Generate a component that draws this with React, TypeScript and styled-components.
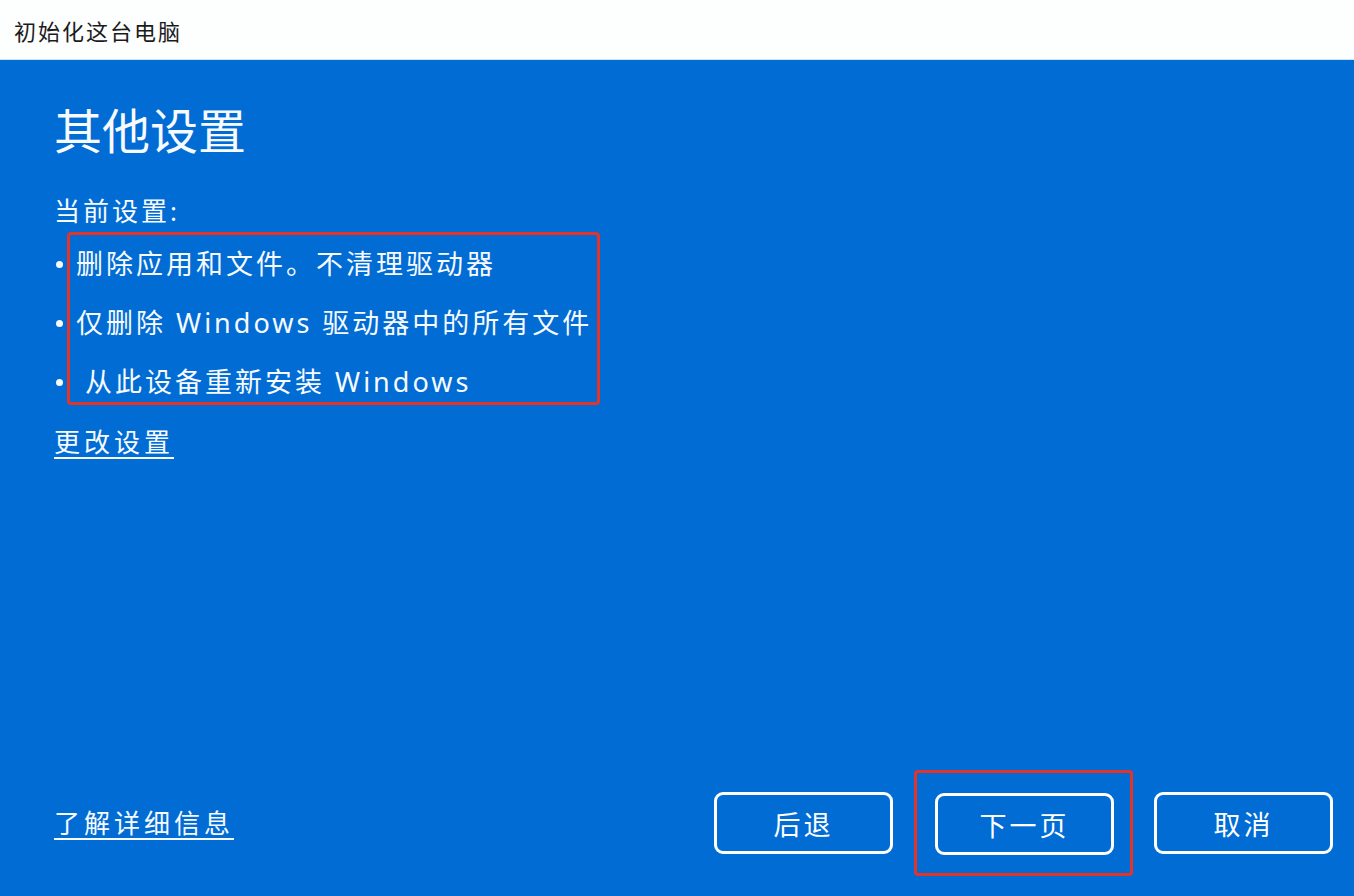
import { createGlobalStyle, styled } from "styled-components";

const GlobalStyle = createGlobalStyle`
    html, body {
        margin: 0;
        padding: 0;
        height: 100%;
    }
    body {
        font-family: "Noto Sans", "Noto Sans CJK SC", sans-serif;
        background: #ffffff;
    }
    #root {
        height: 100%;
    }
`;

const Window = styled.div`
    width: 100%;
    height: 100vh;
    display: flex;
    flex-direction: column;
    overflow: hidden;
`;

const TitleBar = styled.div`
    height: 60px;
    flex-shrink: 0;
    display: flex;
    align-items: center;
    padding-left: 14px;
    background: #fdfefe;
    border-bottom: 1px solid #cfe3f7;
    box-sizing: border-box;
    color: #1b1b1b;
    font-family: "Noto Sans CJK SC", sans-serif;
    font-size: 22px;
    letter-spacing: 2px;
`;

const Body = styled.div`
    flex: 1;
    display: flex;
    flex-direction: column;
    background: #006cd4;
    color: #f7faff;
    padding: 42px 21px 20px 54px;
    font-family: "Noto Sans", "Noto Sans CJK SC", sans-serif;
`;

const Heading = styled.h1`
    margin: 0;
    font-size: 48px;
    line-height: 58px;
    font-weight: 400;
`;

const Label = styled.div`
    margin-top: 33px;
    font-size: 26px;
    line-height: 36px;
    letter-spacing: 3px;
`;

const ListRow = styled.div`
    display: flex;
    align-items: flex-start;
    margin-top: 3px;
`;

const BulletColumn = styled.div`
    width: 13px;
    padding-top: 12px;
    display: flex;
    flex-direction: column;
    gap: 19px;
`;

const BulletLine = styled.div`
    height: 40px;
    display: flex;
    align-items: center;
    padding-left: 2px;

    &::before {
        content: "";
        width: 7px;
        height: 7px;
        border-radius: 50%;
        background: #f7faff;
    }
`;

const HighlightBox = styled.div`
    border: 3px solid #e3342b;
    border-radius: 4px;
    padding: 9px 5px 0 6px;
    display: flex;
    flex-direction: column;
    gap: 19px;
`;

const Item = styled.div<{ $indent?: number }>`
    font-size: 27px;
    line-height: 40px;
    letter-spacing: 3px;
    padding-left: ${({ $indent }) => $indent ?? 0}px;
    white-space: nowrap;
`;

const Link = styled.a<{ $top?: number; $size?: number; $spacing?: number }>`
    display: inline-block;
    margin-top: ${({ $top }) => $top ?? 0}px;
    font-size: ${({ $size }) => $size ?? 26}px;
    line-height: 36px;
    letter-spacing: ${({ $spacing }) => $spacing ?? 4}px;
    color: #f7faff;
    text-decoration: underline;
    text-underline-offset: 5px;
    text-decoration-thickness: 2px;
    cursor: pointer;
`;

const ChangeLink = styled(Link)`
    align-self: flex-start;
`;

const Footer = styled.div`
    margin-top: auto;
    display: flex;
    align-items: center;
    justify-content: space-between;
`;

const Buttons = styled.div`
    display: flex;
    align-items: center;
    gap: 21px;
`;

const Focus = styled.div`
    border: 3px solid #e3342b;
    border-radius: 4px;
    padding: 20px 16px 18px 18px;
`;

const Button = styled.button`
    width: 179px;
    height: 62px;
    box-sizing: border-box;
    border: 3px solid #ffffff;
    border-radius: 9px;
    background: #006cd4;
    color: #ffffff;
    font-family: "Noto Sans CJK SC", sans-serif;
    font-size: 27px;
    letter-spacing: 3px;
    cursor: pointer;
`;

const items = [
    { text: "删除应用和文件。不清理驱动器", indent: 0 },
    { text: "仅删除 Windows 驱动器中的所有文件", indent: 0 },
    { text: "从此设备重新安装 Windows", indent: 9 },
];

function App() {
    return (
        <>
            <GlobalStyle />
            <Window>
                <TitleBar>初始化这台电脑</TitleBar>
                <Body>
                    <Heading>其他设置</Heading>
                    <Label>当前设置:</Label>
                    <ListRow>
                        <BulletColumn>
                            {items.map((item, index) => (
                                <BulletLine key={index} />
                            ))}
                        </BulletColumn>
                        <HighlightBox>
                            {items.map((item, index) => (
                                <Item key={index} $indent={item.indent}>
                                    {item.text}
                                </Item>
                            ))}
                        </HighlightBox>
                    </ListRow>
                    <ChangeLink $top={19}>更改设置</ChangeLink>
                    <Footer>
                        <Link>了解详细信息</Link>
                        <Buttons>
                            <Button>后退</Button>
                            <Focus>
                                <Button>下一页</Button>
                            </Focus>
                            <Button>取消</Button>
                        </Buttons>
                    </Footer>
                </Body>
            </Window>
        </>
    );
}

export default App;
